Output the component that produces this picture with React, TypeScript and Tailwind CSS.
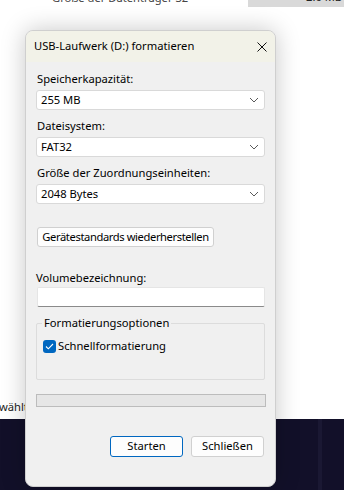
import React from "react";

const font = { fontFamily: '"Segoe UI", "Noto Sans", "Liberation Sans", sans-serif' };

function Chevron() {
  return (
    <svg width="10" height="6" viewBox="0 0 10 6" className="shrink-0">
      <path d="M1 1 L5 5 L9 1" fill="none" stroke="#5a5a5a" strokeWidth="1" />
    </svg>
  );
}

function Select({ value }: { value: string }) {
  return (
    <div className="h-[20px] w-[229px] bg-white border border-[#d9d9d9] rounded-[3px] flex items-center justify-between pl-[4px] pr-[5px] text-[11.2px] text-black">
      <span>{value}</span>
      <Chevron />
    </div>
  );
}

export default function App() {
  return (
    <div className="relative w-[344px] h-[490px] overflow-hidden bg-white" style={font}>
      {/* background desktop */}
      <div className="flex flex-col h-full">
        <div className="h-[8px] flex">
          <div className="w-[248px] h-[8px] overflow-hidden text-[11.2px] text-[#444] pl-[52px] whitespace-nowrap">
            <div className="-mt-[10px]">Größe der Datenträger 32</div>
          </div>
          <div className="flex-1 h-[7px] bg-[#d9d9d9] overflow-hidden text-[11.2px] text-[#222] pl-[58px] whitespace-nowrap">
            <div className="-mt-[11px]">2.0 MB</div>
          </div>
        </div>
        <div className="flex-1 flex flex-col justify-end">
          <div className="text-[11.2px] text-[#222] -ml-[1px] pb-[3px]">wählt</div>
        </div>
        <div className="h-[71px] bg-[#121029] flex">
          <div className="w-[318px]" />
          <div className="w-[4px] bg-[#1a1833]" />
        </div>
      </div>

      {/* dialog */}
      <div className="absolute left-[25px] top-[30px] w-[251px] h-[457px] rounded-[8px] border border-[#cfcfcf] bg-[#f0f0f0] shadow-[0_0_24px_rgba(0,0,0,0.22)] overflow-hidden flex flex-col">
        <div className="h-[31px] bg-[#f2f2e8] flex items-center justify-between pl-[8px] pr-[8px] shrink-0">
          <span className="text-[11.2px] text-black">USB-Laufwerk (D:) formatieren</span>
          <svg width="10" height="10" viewBox="0 0 10 10">
            <path d="M0.5 0.5 L9.5 9.5 M9.5 0.5 L0.5 9.5" stroke="#111" strokeWidth="1" />
          </svg>
        </div>

        <div className="flex flex-col pl-[10px] pt-[9px]">
          <div className="text-[11.2px] text-black leading-[16px] pl-[1px]">Speicherkapazität:</div>
          <div className="mt-[3px]"><Select value="255 MB" /></div>

          <div className="text-[11.2px] text-black leading-[16px] pl-[1px] mt-[8px]">Dateisystem:</div>
          <div className="mt-[3px]"><Select value="FAT32" /></div>

          <div className="text-[11.2px] text-black leading-[16px] pl-[1px] mt-[8px]">Größe der Zuordnungseinheiten:</div>
          <div className="mt-[3px]"><Select value="2048 Bytes" /></div>

          <div className="mt-[23px] pl-[1px]">
            <div className="flex items-center h-[20px] w-[177px] justify-center bg-[#fdfdfd] border border-[#d0d0d0] rounded-[3px] text-[11.2px] tracking-[-0.4px] text-black whitespace-nowrap">
              Gerätestandards wiederherstellen
            </div>
          </div>

          <div className="text-[11.2px] text-black leading-[16px] mt-[23px]">Volumebezeichnung:</div>
          <div className="mt-[1px] ml-[1px] h-[20px] w-[228px] bg-white border border-[#e5e5e5] border-b-[#8a8a8a] rounded-[2px]" />

          <div className="mt-[16px] relative w-[229px] h-[57px] border border-[#dcdcdc] rounded-[2px]">
            <div className="absolute -top-[9px] left-[5px] px-[2px] bg-[#f0f0f0] text-[11.2px] text-black leading-[16px]">
              Formatierungsoptionen
            </div>
            <div className="flex items-center gap-[2px] pl-[6px] pt-[14px]">
              <div className="w-[13px] h-[13px] rounded-[3px] bg-[#0067c0] flex items-center justify-center">
                <svg width="9" height="7" viewBox="0 0 9 7">
                  <path d="M1 3.5 L3.3 5.8 L8 1" fill="none" stroke="#fff" strokeWidth="1.1" />
                </svg>
              </div>
              <span className="text-[11.2px] text-black leading-[16px]">Schnellformatierung</span>
            </div>
          </div>

          <div className="mt-[14px] w-[230px] h-[13px] bg-[#e6e6e6] border border-[#bcbcbc]" />

          <div className="mt-[29px] flex gap-[8px] pl-[74px]">
            <div className="w-[73px] h-[21px] flex items-center justify-center bg-[#fdfdfd] border border-[#0067c0] rounded-[3px] text-[11.2px] text-black">
              Starten
            </div>
            <div className="w-[73px] h-[21px] flex items-center justify-center bg-[#fdfdfd] border border-[#d0d0d0] rounded-[3px] text-[11.2px] text-black">
              Schließen
            </div>
          </div>
        </div>
      </div>
    </div>
  );
}
